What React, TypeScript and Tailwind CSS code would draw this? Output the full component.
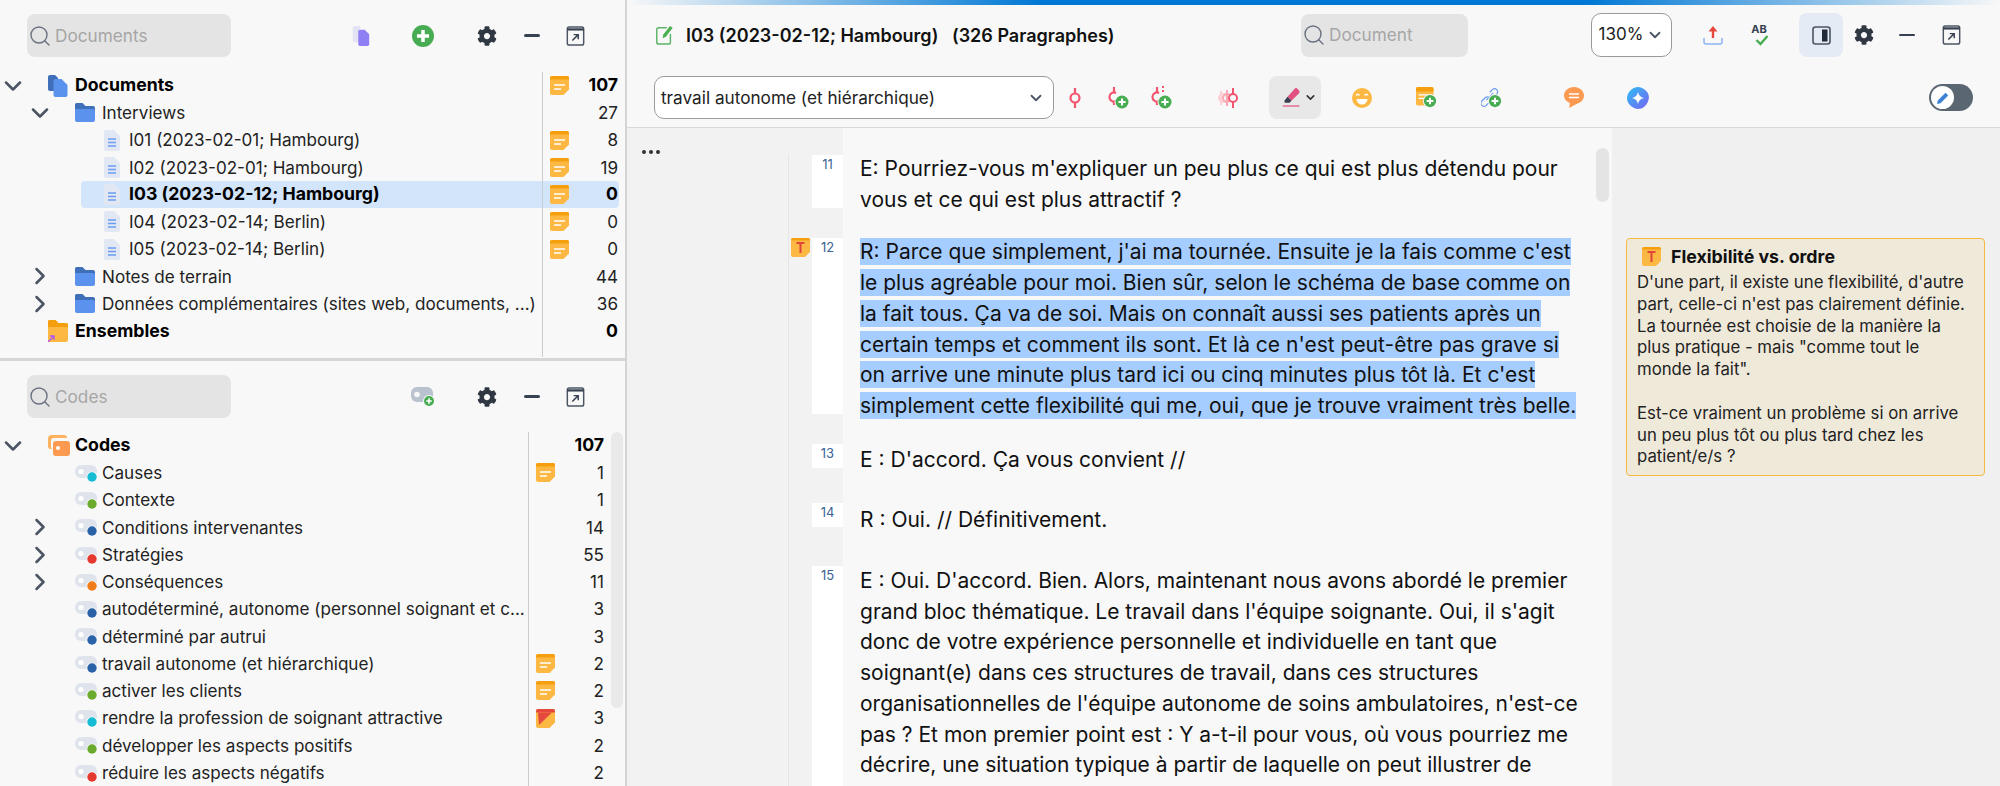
import { ChevronDown, ChevronRight, Search } from 'lucide-react'
import { FaCog } from 'react-icons/fa'

type NoteKind = 'plain' | 'flag'

function NoteIcon({ kind = 'plain' }: { kind?: NoteKind }) {
  return (
    <svg width="19" height="19" viewBox="0 0 19 19" className="shrink-0">
      <path d="M2 0h15a2 2 0 0 1 2 2v11.5L13.5 19H2a2 2 0 0 1-2-2V2a2 2 0 0 1 2-2z" fill="#fdb844" />
      <path d="M2 0h15a2 2 0 0 1 2 2v1.5H0V2a2 2 0 0 1 2-2z" fill={kind === 'flag' ? '#e5483d' : '#f59f0e'} />
      {kind === 'plain' ? (
        <>
          <path d="M4 9h11" stroke="#fff" strokeWidth="1.5" />
          <path d="M4 13h7" stroke="#fff" strokeWidth="1.5" />
        </>
      ) : (
        <path d="M2 3.5h14L3 16z" fill="#e5483d" />
      )}
    </svg>
  )
}

function TNote() {
  return (
    <svg width="19" height="19" viewBox="0 0 19 19" className="shrink-0">
      <path d="M2 0h15a2 2 0 0 1 2 2v12l-5 5H2a2 2 0 0 1-2-2V2a2 2 0 0 1 2-2z" fill="#fdb844" />
      <path d="M2 0h15a2 2 0 0 1 2 2v.5H0V2a2 2 0 0 1 2-2z" fill="#f59f0e" />
      <path d="M5.5 5h8M9.5 5v10" stroke="#e0453a" strokeWidth="2" fill="none" />
    </svg>
  )
}

function DocsIcon() {
  return (
    <svg width="20" height="22" viewBox="0 0 20 22" className="shrink-0">
      <path d="M2 0h5l3 3v13H2a2 2 0 0 1-2-2V2a2 2 0 0 1 2-2z" fill="#3f6fb8" />
      <path d="M7.5 4h6l6 6v10a2 2 0 0 1-2 2H7.5a2 2 0 0 1-2-2V6a2 2 0 0 1 2-2z" fill="#5a92ee" />
    </svg>
  )
}

function FolderIcon() {
  return (
    <svg width="20" height="19" viewBox="0 0 20 19" className="shrink-0">
      <path d="M1.5 0h6l3 3H18a2 2 0 0 1 2 2v3H0V1.5A1.5 1.5 0 0 1 1.5 0z" fill="#3f6fb8" />
      <path d="M0 6h18a2 2 0 0 1 2 2v9a2 2 0 0 1-2 2H2a2 2 0 0 1-2-2z" fill="#5a92ee" />
    </svg>
  )
}

function PageIcon() {
  return (
    <svg width="16" height="21" viewBox="0 0 16 21" className="shrink-0">
      <path d="M2 0h8l6 6v13a2 2 0 0 1-2 2H2a2 2 0 0 1-2-2V2a2 2 0 0 1 2-2z" fill="#e2e8f3" />
      <path d="M4 9h8M4 12.5h8M4 16h8" stroke="#6a9cf2" strokeWidth="1.4" />
    </svg>
  )
}

function SetFolderIcon() {
  return (
    <svg width="20" height="22" viewBox="0 0 20 22" className="shrink-0">
      <path d="M1.5 0h6l3 3H18a2 2 0 0 1 2 2v15a2 2 0 0 1-2 2H2a2 2 0 0 1-2-2V1.5A1.5 1.5 0 0 1 1.5 0z" fill="#fdb844" />
      <path d="M1.5 0h6l3 3H18a2 2 0 0 1 2 2v2H0V1.5A1.5 1.5 0 0 1 1.5 0z" fill="#f59f0e" />
      <path d="M0 22l6-6M2 16h4v4" stroke="#a855f7" strokeWidth="1.3" fill="none" />
    </svg>
  )
}

function CodesRootIcon() {
  return (
    <svg width="22" height="21" viewBox="0 0 22 21" className="shrink-0">
      <path d="M4 0h12a3 3 0 0 1 3 3H6a3 3 0 0 0-3 3v6a2 2 0 0 0 2 2H2.5A2.5 2.5 0 0 1 0 11.5V4a4 4 0 0 1 4-4z" fill="#fdb25e" />
      <rect x="5" y="6" width="17" height="15" rx="3" fill="#fd9a52" />
      <circle cx="10" cy="13" r="2" fill="#fff" />
    </svg>
  )
}

function CodeIcon({ color }: { color: string }) {
  return (
    <svg width="22" height="22" viewBox="0 0 22 22" className="shrink-0">
      <rect x="0" y="3" width="22" height="13" rx="6" fill="#dfe4ec" />
      <circle cx="6" cy="9.5" r="2.6" fill="#fff" />
      <circle cx="17" cy="15" r="5.5" fill="#f8f8f8" />
      <circle cx="17" cy="15" r="4.7" fill={color} />
    </svg>
  )
}

function Plus({ cx, cy, r }: { cx: number; cy: number; r: number }) {
  const a = r * 0.55
  return (
    <g>
      <circle cx={cx} cy={cy} r={r} fill="#48ad52" />
      <path d={`M${cx - a} ${cy}h${a * 2}M${cx} ${cy - a}v${a * 2}`} stroke="#fff" strokeWidth={r * 0.32} />
    </g>
  )
}

function AddPageIcon() {
  return (
    <svg width="18" height="20" viewBox="0 0 18 22" className="shrink-0">
      <path d="M2 0h6v18H2a2 2 0 0 1-2-2V2a2 2 0 0 1 2-2z" fill="#e3e3f6" />
      <path d="M8 4h5l5 5v11a2 2 0 0 1-2 2H8a2 2 0 0 1-2-2V6a2 2 0 0 1 2-2z" fill="#8f7ff5" />
    </svg>
  )
}

function AddCircleIcon() {
  return (
    <svg width="22" height="24" viewBox="0 0 22 24" className="shrink-0">
      <Plus cx={11} cy={12} r={11} />
    </svg>
  )
}

function AddCodeIcon() {
  return (
    <svg width="24" height="22" viewBox="0 0 24 22" className="shrink-0">
      <rect x="0" y="1" width="22" height="15" rx="6" fill="#b9c2cf" />
      <circle cx="6" cy="8.5" r="2.8" fill="#f8f8f8" />
      <circle cx="18" cy="15" r="6" fill="#f8f8f8" />
      <Plus cx={18} cy={15} r={5} />
    </svg>
  )
}

function MinimizeIcon() {
  return <div className="h-[2.5px] w-[16px] rounded-full bg-[#374151]" />
}

function ExpandIcon() {
  return (
    <svg width="19" height="20" viewBox="0 0 20 22" className="shrink-0">
      <rect x="1" y="1" width="18" height="20" rx="2" fill="none" stroke="#4b5563" strokeWidth="1.6" />
      <path d="M1 2.5h18V5H1z" fill="#374151" />
      <path d="M6.5 16l6.5-6.5M8 9.5h5v5" fill="none" stroke="#374151" strokeWidth="1.6" />
    </svg>
  )
}

function EditIcon() {
  return (
    <svg width="19" height="20" viewBox="0 0 19 22" className="shrink-0">
      <path d="M12 3H3a2 2 0 0 0-2 2v14a2 2 0 0 0 2 2h11a2 2 0 0 0 2-2V10" fill="none" stroke="#5cb368" strokeWidth="1.6" />
      <path d="M15.5 1l3 2-7.5 10-3.5 1.5.5-3.8z" fill="#4caf50" />
    </svg>
  )
}

function ExportIcon() {
  return (
    <svg width="20" height="20" viewBox="0 0 20 20" className="shrink-0">
      <path d="M10 3v10" stroke="#e5483d" strokeWidth="2.4" />
      <path d="M5.5 6.5L10 1l4.5 5.500z" fill="#e5483d" />
      <path d="M1 13v4a2 2 0 0 0 2 2h14a2 2 0 0 0 2-2v-4" fill="none" stroke="#8db2f2" strokeWidth="1.5" />
    </svg>
  )
}

function SpellIcon() {
  return (
    <div className="flex w-[24px] flex-col items-center">
      <span className="text-[11px] leading-[11px] font-bold text-[#374151]">AB</span>
      <svg width="14" height="12" viewBox="0 0 14 12" className="-mt-[1px] ml-[5px]">
        <path d="M1.5 6l4 4 7-8" fill="none" stroke="#48ad52" strokeWidth="2.4" />
      </svg>
    </div>
  )
}

function PanelIcon() {
  return (
    <svg width="19" height="19" viewBox="0 0 19 19" className="shrink-0">
      <rect x="1" y="1" width="17" height="17" rx="2.5" fill="none" stroke="#4b5563" strokeWidth="1.6" />
      <rect x="10" y="3.5" width="5.5" height="12" fill="#1f2937" />
    </svg>
  )
}

function PinIcon() {
  return (
    <svg width="24" height="24" viewBox="0 0 24 24" className="shrink-0">
      <path d="M12 2v6M12 16v6" stroke="#f2566f" strokeWidth="2.2" />
      <circle cx="12" cy="12" r="4.5" fill="none" stroke="#f2566f" strokeWidth="2.2" />
    </svg>
  )
}

function PinAddIcon({ dotted }: { dotted?: boolean }) {
  return (
    <svg width="28" height="26" viewBox="0 0 28 26" className="shrink-0">
      <path d="M9 2v6M9 16v4" stroke="#f2566f" strokeWidth="2.2" />
      <path d="M11 8a4.5 4.5 0 1 0 0 8" fill="none" stroke="#f2566f" strokeWidth="2.2" />
      {dotted && <path d="M15 1v2M15 5v2" stroke="#f2566f" strokeWidth="2" />}
      <circle cx="17" cy="17" r="7.5" fill="#f8f8f8" />
      <Plus cx={17} cy={17} r={6.5} />
    </svg>
  )
}

function PinStackIcon() {
  return (
    <svg width="24" height="24" viewBox="0 0 24 24" className="shrink-0">
      <path d="M5 5v14" stroke="#fcd0d6" strokeWidth="2" />
      <circle cx="7" cy="12" r="4" fill="none" stroke="#fcd0d6" strokeWidth="2" />
      <path d="M11 4v16" stroke="#f9a8b4" strokeWidth="2" />
      <circle cx="11" cy="12" r="4" fill="none" stroke="#f9a8b4" strokeWidth="2" />
      <path d="M17 2v20" stroke="#f2566f" strokeWidth="2" />
      <circle cx="17" cy="12" r="4" fill="#f8f8f8" stroke="#f2566f" strokeWidth="2" />
    </svg>
  )
}

function HighlighterIcon() {
  return (
    <svg width="19" height="21" viewBox="0 0 24 26" className="shrink-0">
      <path d="M7 12L16 2a2.5 2.5 0 0 1 3.500 0l2 2a2.500 2.500 0 0 1 0 3.500L12 17z" fill="#e0517f" />
      <path d="M7 12l5 5-2.500 2.500H3.500L3 17z" fill="#374151" />
      <rect x="1" y="23" width="21" height="1.5" fill="#e0517f" />
    </svg>
  )
}

function SmileIcon() {
  return (
    <svg width="20" height="20" viewBox="0 0 20 20" className="shrink-0">
      <circle cx="10" cy="10" r="10" fill="#fdb844" />
      <path d="M4 7.5q2-2.500 3.500 0M12.500 7.500q2-2.500 3.500 0" fill="none" stroke="#fff" strokeWidth="1.4" />
      <path d="M4.5 11h11a5.500 5.500 0 0 1-11 0z" fill="#fff" />
    </svg>
  )
}

function MemoAddIcon() {
  return (
    <svg width="21" height="21" viewBox="0 0 24 24" className="shrink-0">
      <rect x="0" y="0" width="20" height="21" rx="2" fill="#fdb844" />
      <path d="M2 0h16a2 2 0 0 1 2 2v3H0V2a2 2 0 0 1 2-2z" fill="#f59f0e" />
      <path d="M3 9h10M3 13h7" stroke="#fff" strokeWidth="1.5" />
      <circle cx="16" cy="16" r="8" fill="#f8f8f8" />
      <Plus cx={16} cy={16} r={7} />
    </svg>
  )
}

function LinkAddIcon() {
  return (
    <svg width="21" height="21" viewBox="0 0 24 24" className="shrink-0">
      <path d="M9 18l-3 3a3.500 3.500 0 0 1-5-5l4-4a3.500 3.500 0 0 1 4 0M10 6l3-3a3.500 3.500 0 0 1 5 5l-2 2" fill="none" stroke="#6f9df0" strokeWidth="1.4" />
      <path d="M6 15l8-8" stroke="#6f9df0" strokeWidth="1.4" />
      <circle cx="16" cy="16" r="8" fill="#f8f8f8" />
      <Plus cx={16} cy={16} r={7} />
    </svg>
  )
}

function CommentIcon() {
  return (
    <svg width="20" height="21" viewBox="0 0 20 21" className="shrink-0">
      <path d="M10 0c5.500 0 10 3.700 10 8.500 0 4-3 7.200-7 8.200L5 21l1-4.900C2.500 14.800 0 12 0 8.500 0 3.700 4.500 0 10 0z" fill="#fd9a52" />
      <path d="M5 7h10M5 10.500h10" stroke="#fff" strokeWidth="1.7" />
    </svg>
  )
}

function AiIcon() {
  return (
    <svg width="22" height="22" viewBox="0 0 22 22" className="shrink-0">
      <defs>
        <linearGradient id="ai" x1="0" y1="0" x2="1" y2="1">
          <stop offset="0" stopColor="#2cc0f5" />
          <stop offset="1" stopColor="#7a62f2" />
        </linearGradient>
      </defs>
      <path d="M11 0c2.500 0 4.500 1 6.500 2.500S21.500 6 21.800 9c.300 2.800-.5 5.500-2 7.700S16 21.500 13 21.800c-2.800.4-5.500-.2-7.700-1.800S1 16.500.3 13.500C-.3 10.700.2 8 1.800 5.600 3.500 2.800 7 0 11 0z" fill="url(#ai)" />
      <path d="M11 5c.7 3.500 2.500 5.300 6 6-3.500.7-5.300 2.500-6 6-.7-3.500-2.500-5.300-6-6 3.500-.7 5.300-2.500 6-6z" fill="#fff" />
    </svg>
  )
}

function SearchBox({ label, className }: { label: string; className: string }) {
  return (
    <div className={`flex h-[43px] items-center rounded-lg bg-[#e4e4e4] ${className}`}>
      <Search size={24} strokeWidth={1.4} className="ml-[1px] shrink-0 text-[#6b7280]" />
      <span className="ml-[3px] text-[17.2px] text-[#a6a6a6]">{label}</span>
    </div>
  )
}

function Slot({ children, className = '' }: { children: React.ReactNode; className?: string }) {
  return <div className={`flex w-[24px] shrink-0 items-center justify-center ${className}`}>{children}</div>
}

interface Row {
  level: 0 | 1 | 2
  icon: React.ReactNode
  label: string
  count: number
  open?: boolean
  note?: NoteKind
  bold?: boolean
  selected?: boolean
}

const indent = ['pl-[6px]', 'pl-[33px]', 'pl-[60px]']

function TreeRow({ row, listWidth, pr }: { row: Row; listWidth: string; pr: string }) {
  const strong = row.bold || row.selected
  return (
    <div
      className={`flex h-[27.25px] items-center leading-normal ${strong ? 'text-[17.7px] font-bold text-black' : 'text-[17.1px] text-[#222]'} ${
        row.selected ? 'mr-[6px] ml-[81px] rounded bg-[#d2e5fa]' : ''
      }`}
    >
      <div className={`flex h-full min-w-0 items-center ${row.selected ? 'w-[461px] pl-[21px]' : `${listWidth} ${indent[row.level]}`}`}>
        {!row.selected && (
          <div className="mr-[28px] w-[14px] shrink-0 text-[#4b5563]">
            {row.open === true && <ChevronDown size={28} strokeWidth={2.2} className="-ml-[7px]" />}
            {row.open === false && <ChevronRight size={28} strokeWidth={2.2} className="-ml-[7px]" />}
          </div>
        )}
        <div className="flex w-[27px] shrink-0 items-center">{row.icon}</div>
        <span className="overflow-hidden whitespace-nowrap">{row.label}</span>
      </div>
      <div className={`flex h-full flex-1 items-center border-l border-[#c9cdd2] pl-[7px] ${row.selected ? 'pr-[1px]' : pr}`}>
        <div className="w-[19px]">{row.note && <NoteIcon kind={row.note} />}</div>
        <span className="flex-1 text-right">{row.count}</span>
      </div>
    </div>
  )
}

const pageIcon = (
  <div className="pl-[2px]">
    <PageIcon />
  </div>
)

const docRows: Row[] = [
  { level: 0, icon: <DocsIcon />, label: 'Documents', count: 107, open: true, note: 'plain', bold: true },
  { level: 1, icon: <FolderIcon />, label: 'Interviews', count: 27, open: true },
  { level: 2, icon: pageIcon, label: 'I01 (2023-02-01; Hambourg)', count: 8, note: 'plain' },
  { level: 2, icon: pageIcon, label: 'I02 (2023-02-01; Hambourg)', count: 19, note: 'plain' },
  { level: 2, icon: pageIcon, label: 'I03 (2023-02-12; Hambourg)', count: 0, note: 'plain', selected: true },
  { level: 2, icon: pageIcon, label: 'I04 (2023-02-14; Berlin)', count: 0, note: 'plain' },
  { level: 2, icon: pageIcon, label: 'I05 (2023-02-14; Berlin)', count: 0, note: 'plain' },
  { level: 1, icon: <FolderIcon />, label: 'Notes de terrain', count: 44, open: false },
  { level: 1, icon: <FolderIcon />, label: 'Données complémentaires (sites web, documents, ...)', count: 36, open: false },
  { level: 0, icon: <SetFolderIcon />, label: 'Ensembles', count: 0, bold: true },
]

const teal = '#14bcd4'
const green = '#6aab2e'
const blue = '#2a62a8'
const red = '#e5392f'
const orange = '#f07c1a'

const codeRows: Row[] = [
  { level: 0, icon: <CodesRootIcon />, label: 'Codes', count: 107, open: true, bold: true },
  { level: 1, icon: <CodeIcon color={teal} />, label: 'Causes', count: 1, note: 'plain' },
  { level: 1, icon: <CodeIcon color={green} />, label: 'Contexte', count: 1 },
  { level: 1, icon: <CodeIcon color={blue} />, label: 'Conditions intervenantes', count: 14, open: false },
  { level: 1, icon: <CodeIcon color={red} />, label: 'Stratégies', count: 55, open: false },
  { level: 1, icon: <CodeIcon color={orange} />, label: 'Conséquences', count: 11, open: false },
  { level: 1, icon: <CodeIcon color={blue} />, label: 'autodéterminé, autonome (personnel soignant et c...', count: 3 },
  { level: 1, icon: <CodeIcon color={blue} />, label: 'déterminé par autrui', count: 3 },
  { level: 1, icon: <CodeIcon color={blue} />, label: 'travail autonome (et hiérarchique)', count: 2, note: 'plain' },
  { level: 1, icon: <CodeIcon color={green} />, label: 'activer les clients', count: 2, note: 'plain' },
  { level: 1, icon: <CodeIcon color={teal} />, label: 'rendre la profession de soignant attractive', count: 3, note: 'flag' },
  { level: 1, icon: <CodeIcon color={green} />, label: 'développer les aspects positifs', count: 2 },
  { level: 1, icon: <CodeIcon color={red} />, label: 'réduire les aspects négatifs', count: 2 },
]

function LeftColumn() {
  return (
    <div className="box-content flex h-full w-[625px] shrink-0 flex-col border-r-[2px] border-[#d4d4d4]">
      <section className="box-content h-[358px] shrink-0 border-b-[3px] border-[#d6d6d6]">
        <div className="flex items-center pt-[14px]">
          <SearchBox label="Documents" className="ml-[27px] w-[204px]" />
          <Slot className="ml-[118px]"><AddPageIcon /></Slot>
          <Slot className="ml-[38px]"><AddCircleIcon /></Slot>
          <Slot className="ml-[40px]"><FaCog size={20} className="text-[#2f3742]" /></Slot>
          <Slot className="ml-[21px]"><MinimizeIcon /></Slot>
          <Slot className="ml-[19px]"><ExpandIcon /></Slot>
        </div>
        <div className="mt-[15px]">
          {docRows.map(row => (
            <TreeRow key={row.label} row={row} listWidth="w-[542px]" pr="pr-[7px]" />
          ))}
          <div className="ml-[542px] h-[12px] border-l border-[#c9cdd2]" />
        </div>
      </section>
      <section className="relative min-h-0 flex-1 overflow-hidden">
        <div className="flex items-center pt-[14px]">
          <SearchBox label="Codes" className="ml-[27px] w-[204px]" />
          <Slot className="ml-[180px]"><AddCodeIcon /></Slot>
          <Slot className="ml-[40px]"><FaCog size={20} className="text-[#2f3742]" /></Slot>
          <Slot className="ml-[21px]"><MinimizeIcon /></Slot>
          <Slot className="ml-[19px]"><ExpandIcon /></Slot>
        </div>
        <div className="mt-[14px]">
          {codeRows.map(row => (
            <TreeRow key={row.label} row={row} listWidth="w-[528px]" pr="pr-[21px]" />
          ))}
        </div>
        <div className="absolute top-[71px] right-[2px] h-[276px] w-[12px] rounded-full bg-[#e9e9e9]" />
      </section>
    </div>
  )
}

function TitleBar() {
  return (
    <div className="flex items-center pt-[13px] pl-[28px]">
      <EditIcon />
      <h1 className="ml-[12px] w-[470px] text-[18px] font-semibold whitespace-pre text-[#111]">I03 (2023-02-12; Hambourg)   (326 Paragraphes)</h1>
      <SearchBox label="Document" className="ml-[145px] w-[167px]" />
      <div className="ml-[123px] flex h-[44px] w-[81px] items-center justify-center gap-[3px] rounded-[10px] border border-[#9a9a9a] bg-white text-[17px] text-[#222]">
        130%
        <ChevronDown size={18} strokeWidth={2.4} className="text-[#4b5563]" />
      </div>
      <Slot className="ml-[29px]"><ExportIcon /></Slot>
      <Slot className="ml-[22px]"><SpellIcon /></Slot>
      <div className="ml-[28px] flex h-[44px] w-[44px] items-center justify-center rounded-lg bg-[#e4ebf4]"><PanelIcon /></div>
      <Slot className="ml-[9px]"><FaCog size={20} className="text-[#2f3742]" /></Slot>
      <Slot className="ml-[19px]"><MinimizeIcon /></Slot>
      <Slot className="ml-[20px]"><ExpandIcon /></Slot>
    </div>
  )
}

function ToolBar() {
  return (
    <div className="mt-[19px] flex items-center border-b-[1.5px] border-[#d8d8d8] pb-[8px] pl-[27px]">
      <div className="flex h-[43px] w-[400px] items-center justify-between rounded-[10px] border border-[#9a9a9a] bg-white pr-[8px] pl-[6px] text-[17.2px] text-[#222]">
        travail autonome (et hiérarchique)
        <ChevronDown size={18} strokeWidth={2.4} className="text-[#4b5563]" />
      </div>
      <Slot className="ml-[9px]"><PinIcon /></Slot>
      <Slot className="ml-[20px]"><PinAddIcon /></Slot>
      <Slot className="ml-[19px]"><PinAddIcon dotted /></Slot>
      <Slot className="ml-[42px]"><PinStackIcon /></Slot>
      <div className="ml-[29px] flex h-[43px] w-[52px] items-center gap-[3px] rounded-lg bg-[#e8e8e8] pl-[13px]">
        <HighlighterIcon />
        <ChevronDown size={13} strokeWidth={3} className="text-[#333]" />
      </div>
      <Slot className="ml-[29px]"><SmileIcon /></Slot>
      <Slot className="ml-[40px]"><MemoAddIcon /></Slot>
      <Slot className="ml-[41px]"><LinkAddIcon /></Slot>
      <Slot className="ml-[59px]"><CommentIcon /></Slot>
      <Slot className="ml-[40px]"><AiIcon /></Slot>
      <div className="ml-[279px] flex h-[27px] w-[44px] items-center rounded-full bg-[#5a6672] pl-[2px]">
        <div className="flex h-[23px] w-[23px] items-center justify-center rounded-full bg-white">
          <svg width="14" height="14" viewBox="0 0 14 14">
            <path d="M1 13l.8-3.500L9.500 1.800l2.700 2.700-7.700 7.700z" fill="#3b82d6" />
          </svg>
        </div>
      </div>
    </div>
  )
}

interface Paragraph {
  num: number
  lines: string[]
  note?: boolean
  marked?: boolean
  textPad: string
  numBox: string
}

const paragraphs: Paragraph[] = [
  {
    num: 11,
    lines: ["E: Pourriez-vous m'expliquer un peu plus ce qui est plus détendu pour", 'vous et ce qui est plus attractif ?'],
    textPad: 'pb-[22px]',
    numBox: 'h-[53px] mt-[1px]',
  },
  {
    num: 12,
    note: true,
    marked: true,
    lines: [
      "R: Parce que simplement, j'ai ma tournée. Ensuite je la fais comme c'est",
      'le plus agréable pour moi. Bien sûr, selon le schéma de base comme on',
      'la fait tous. Ça va de soi. Mais on connaît aussi ses patients après un',
      "certain temps et comment ils sont. Et là ce n'est peut-être pas grave si",
      "on arrive une minute plus tard ici ou cinq minutes plus tôt là. Et c'est",
      'simplement cette flexibilité qui me, oui, que je trouve vraiment très belle.',
    ],
    textPad: 'pb-[22px]',
    numBox: 'h-[176px] mt-[1px]',
  },
  { num: 13, lines: ["E : D'accord. Ça vous convient //"], textPad: 'pt-[1px] pb-[28px]', numBox: 'h-[24px]' },
  { num: 14, lines: ['R : Oui. // Définitivement.'], textPad: 'pt-[2px] pb-[30px]', numBox: 'h-[24px]' },
  {
    num: 15,
    lines: [
      "E : Oui. D'accord. Bien. Alors, maintenant nous avons abordé le premier",
      "grand bloc thématique. Le travail dans l'équipe soignante. Oui, il s'agit",
      'donc de votre expérience personnelle et individuelle en tant que',
      'soignant(e) dans ces structures de travail, dans ces structures',
      "organisationnelles de l'équipe autonome de soins ambulatoires, n'est-ce",
      'pas ? Et mon premier point est : Y a-t-il pour vous, où vous pourriez me',
      'décrire, une situation typique à partir de laquelle on peut illustrer de',
    ],
    textPad: 'pb-[60px]',
    numBox: 'h-[240px]',
  },
]

function ParagraphRow({ p }: { p: Paragraph }) {
  return (
    <div className="flex">
      <div className="w-[24px] shrink-0 border-l border-[#e6e6e6] pt-[1px] pl-[2px]">{p.note && <TNote />}</div>
      <div className="w-[31px] shrink-0">
        <div className={`bg-white pt-[1px] text-center text-[13px] leading-[16px] text-[#3a6394] ${p.numBox}`}>{p.num}</div>
      </div>
      <div className={`min-w-0 flex-1 bg-[#f8f8f8] pl-[17px] text-[21px] leading-[30.7px] text-[#111] ${p.textPad}`}>
        {p.lines.map(line => (
          <div key={line} className="whitespace-pre">
            <span className={p.marked ? 'bg-[#a6cdff] py-[1px]' : ''}>{line}</span>
          </div>
        ))}
      </div>
    </div>
  )
}

function CommentCard() {
  const first = [
    "D'une part, il existe une flexibilité, d'autre",
    "part, celle-ci n'est pas clairement définie.",
    'La tournée est choisie de la manière la',
    'plus pratique - mais "comme tout le',
    'monde la fait".',
  ]
  const second = ['Est-ce vraiment un problème si on arrive', 'un peu plus tôt ou plus tard chez les', 'patient/e/s ?']
  return (
    <div className="mt-[110px] mr-[15px] ml-[14px] h-[238px] rounded-[4px] border border-[#f5b942] bg-[#efe9da] px-[10px] pt-[5px]">
      <div className="flex items-center pl-[5px]">
        <TNote />
        <span className="ml-[10px] text-[17.8px] leading-[25px] font-bold text-[#111]">Flexibilité vs. ordre</span>
      </div>
      <div className="mt-[3px] text-[16.75px] leading-[21.8px] text-[#222]">
        {first.map(line => <div key={line} className="whitespace-nowrap">{line}</div>)}
        <div className="h-[21.8px]" />
        {second.map(line => <div key={line} className="whitespace-nowrap">{line}</div>)}
      </div>
    </div>
  )
}

function Editor() {
  return (
    <div className="flex min-w-0 flex-1 flex-col">
      <div className="-mb-[5px] h-[5px] shrink-0 bg-[linear-gradient(to_right,#f8f8f8,#0078d4_30%,#0078d4_70%,#f8f8f8)]" />
      <TitleBar />
      <ToolBar />
      <div className="flex min-h-0 flex-1 overflow-hidden">
        <div className="w-[161px] shrink-0 bg-[#f2f2f2] pt-[22px] pl-[15px]">
          <div className="flex gap-[3px]">
            <span className="h-[4px] w-[4px] rounded-full bg-[#333]" />
            <span className="h-[4px] w-[4px] rounded-full bg-[#333]" />
            <span className="h-[4px] w-[4px] rounded-full bg-[#333]" />
          </div>
        </div>
        <div className="relative min-w-0 flex-1 bg-[#f2f2f2]">
          <div className="ml-[55px] h-[26px] bg-[#f8f8f8]" />
          {paragraphs.map(p => (
            <ParagraphRow key={p.num} p={p} />
          ))}
          <div className="absolute top-[20px] right-[3px] h-[54px] w-[13px] rounded-full bg-[#e4e4e4]" />
        </div>
        <aside className="w-[388px] shrink-0 bg-[#f0f0f0]">
          <CommentCard />
        </aside>
      </div>
    </div>
  )
}

export default function App() {
  return (
    <div className="flex h-[786px] w-[2000px] overflow-hidden bg-[#f8f8f8] font-['Inter',sans-serif]">
      <LeftColumn />
      <Editor />
    </div>
  )
}
